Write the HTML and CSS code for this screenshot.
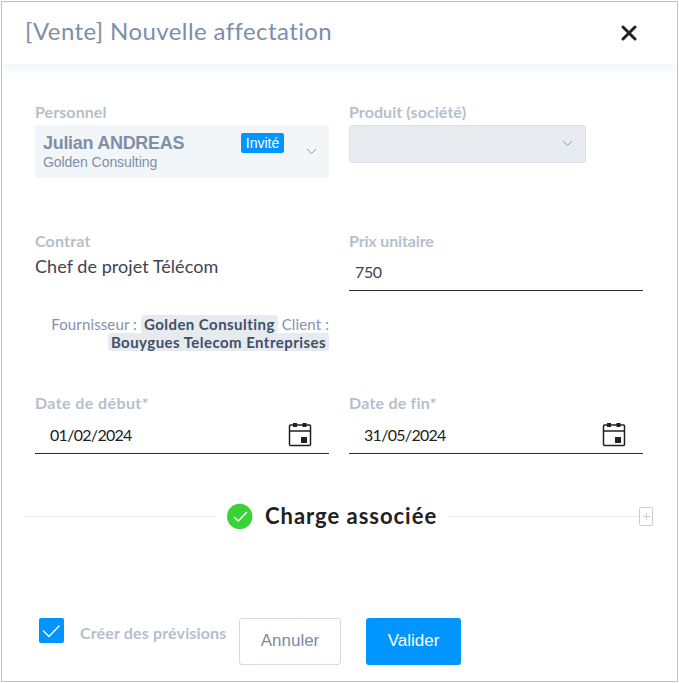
FILE: index.html
```html
<!DOCTYPE html>
<html lang="fr">
<head>
  <meta charset="UTF-8" />
  <meta name="viewport" content="width=device-width, initial-scale=1" />
  <title>Nouvelle affectation</title>
  <link rel="stylesheet" href="styles.css">
</head>
<body>
  <div class="modal">
    <header class="modal-header">
      <h1>[Vente] Nouvelle affectation</h1>
      <button class="btn-close" aria-label="Fermer">
        <svg width="16" height="16" viewBox="0 0 16 16"><path d="M2 2L14 14M14 2L2 14" /></svg>
      </button>
    </header>

    <form class="modal-body">
      <div class="grid">
        <div class="field">
          <label>Personnel</label>
          <div class="select select-user">
            <div class="user">
              <strong>Julian ANDREAS</strong>
              <span>Golden Consulting</span>
            </div>
            <span class="badge">Invité</span>
            <svg class="chevron" width="11" height="7" viewBox="0 0 11 7"><path d="M1 1L5.5 5.5L10 1" /></svg>
          </div>
        </div>
        <div class="field">
          <label>Produit (société)</label>
          <div class="select select-disabled">
            <svg class="chevron" width="11" height="7" viewBox="0 0 11 7"><path d="M1 1L5.5 5.5L10 1" /></svg>
          </div>
        </div>

        <div class="field">
          <label class="label-contrat">Contrat</label>
          <div class="contrat">Chef de projet Télécom</div>
          <div class="parties">
            <div>Fournisseur : <b>Golden Consulting</b> Client :</div>
            <div><b>Bouygues Telecom Entreprises</b></div>
          </div>
        </div>
        <div class="field">
          <label class="label-prix">Prix unitaire</label>
          <div class="input input-prix">750</div>
        </div>

        <div class="field">
          <label class="label-date">Date de début*</label>
          <div class="input input-date">
            <span>01/02/2024</span>
            <svg class="calendar" width="24" height="25" viewBox="0 0 24 25">
              <rect x="1.5" y="3" width="21" height="20.5" rx="1" />
              <path d="M1.5 9H22.5" />
              <path class="plein" d="M5 1H9V5H5ZM14.5 1H18.5V5H14.5ZM13 15H19V21H13Z" />
            </svg>
          </div>
        </div>
        <div class="field">
          <label class="label-date label-fin">Date de fin*</label>
          <div class="input input-date">
            <span>31/05/2024</span>
            <svg class="calendar" width="24" height="25" viewBox="0 0 24 25">
              <rect x="1.5" y="3" width="21" height="20.5" rx="1" />
              <path d="M1.5 9H22.5" />
              <path class="plein" d="M5 1H9V5H5ZM14.5 1H18.5V5H14.5ZM13 15H19V21H13Z" />
            </svg>
          </div>
        </div>
      </div>

      <!-- Séparateur de section -->
      <div class="section">
        <span class="line line-left"></span>
        <svg class="ok" width="26" height="26" viewBox="0 0 26 26">
          <circle cx="12.7" cy="13.5" r="12.7" />
          <path d="M7 14L11.2 18L20 9" />
        </svg>
        <h2>Charge associée</h2>
        <span class="line"></span>
        <span class="plus">
          <svg width="7" height="7" viewBox="0 0 7 7"><path d="M0 3.5H7M3.5 0V7" /></svg>
        </span>
      </div>

      <div class="actions">
        <span class="checkbox">
          <svg width="19" height="14" viewBox="0 0 19 14"><path d="M1 6.5L7 12.5L17.5 1.5" /></svg>
        </span>
        <label>Créer des prévisions</label>
        <button type="button" class="btn-annuler">Annuler</button>
        <button type="button" class="btn-valider">Valider</button>
      </div>
    </form>
  </div>
</body>
</html>
```
FILE: styles.css
```css
* {
  box-sizing: border-box;
}

body {
  margin: 0;
  padding: 1px;
  background-color: #fff;
  font-family: Lato, "Liberation Sans", sans-serif;
  color: #3f4254;
}

svg {
  display: block;
  fill: none;
}

.modal {
  width: 677px;
  height: 681px;
  border: 1px solid #c3c3c3;
  background-color: #fff;
}

.modal-header {
  display: flex;
  align-items: center;
  justify-content: space-between;
  height: 62px;
  padding: 0 40px 0 23px;
  box-shadow: 0 1px 15px rgba(82, 105, 160, 0.13);
  clip-path: inset(0 0 -20px 0);
}

h1 {
  margin: 0;
  padding-bottom: 5px;
  font-size: 24px;
  font-weight: 400;
  color: #7e8ea9;
  letter-spacing: 0.41px;
  white-space: nowrap;
}

.btn-close {
  padding: 0;
  border: none;
  background: none;
}

.btn-close path {
  stroke: #212121;
  stroke-width: 3;
  stroke-linecap: round;
}

.modal-body {
  padding: 38px 24px 0 23px;
}

.grid {
  display: grid;
  grid-template-columns: 294px 294px;
  grid-template-rows: 129px 162px 103px;
  column-gap: 20px;
  padding-left: 10px;
}

label {
  display: block;
  height: 23px;
  line-height: 20px;
  font-size: 16px;
  font-weight: 700;
  color: #b5bfcb;
  letter-spacing: 0.08px;
  white-space: nowrap;
}

.label-contrat {
  letter-spacing: 0.2px;
}

.label-prix {
  letter-spacing: -0.15px;
}

.label-date {
  letter-spacing: 0.4px;
}

.label-fin {
  letter-spacing: 0.22px;
}

.select {
  display: flex;
  align-items: center;
  border-radius: 3px;
}

.select-user {
  height: 53px;
  padding: 0 12px 0 8px;
  background-color: #f3f6f9;
  font-family: "Liberation Sans", Arial, sans-serif;
}

.select-disabled {
  width: 237px;
  height: 38px;
  padding: 0 12px 2px 0;
  justify-content: flex-end;
  border: 1px solid #dcdfe8;
  background-color: #e7eaef;
}

.user {
  display: flex;
  flex-direction: column;
  flex: 1;
  color: #7e8fa8;
}

.user strong {
  font-size: 18px;
  line-height: 20px;
  letter-spacing: -0.3px;
}

.user span {
  font-size: 14px;
  line-height: 18px;
  letter-spacing: -0.06px;
}

.badge {
  width: 43px;
  height: 20px;
  margin: 0 22px 17px 0;
  border-radius: 2px;
  background-color: #0095ff;
  color: #fff;
  font-size: 14px;
  line-height: 20px;
  text-align: center;
}

.chevron path {
  stroke: #8d9aab;
}

.contrat {
  margin-top: 1px;
  font-size: 18px;
  line-height: 22px;
  letter-spacing: 0.05px;
}

.parties {
  margin-top: 38px;
  font-size: 15px;
  line-height: 18px;
  color: #8391a9;
  letter-spacing: 0.12px;
  text-align: right;
  white-space: nowrap;
}

.parties b {
  display: inline-block;
  padding: 0 3px;
  border-radius: 3px;
  background-color: #e7eaef;
  color: #3d5068;
  letter-spacing: 0.45px;
}

.input {
  display: flex;
  align-items: center;
  height: 37px;
  border-bottom: 1px solid #2b2b3f;
  font-size: 16px;
}

.input-prix {
  padding: 0 0 2px 6px;
  letter-spacing: -0.4px;
}

.input-date {
  height: 38px;
  justify-content: space-between;
  padding: 0 17px 0 15px;
  color: #212121;
  letter-spacing: -0.7px;
}

.calendar rect,
.calendar path {
  stroke: #212121;
  stroke-width: 1.5;
}

.calendar .plein {
  fill: #212121;
  stroke: none;
}

.section {
  display: flex;
  align-items: center;
  height: 40px;
}

.line {
  flex: 1;
  height: 1px;
  background-color: #ebebeb;
}

.line-left {
  flex: none;
  width: 190px;
}

.ok {
  margin-left: 12px;
}

.ok circle {
  fill: #3ad336;
}

.ok path,
.checkbox path {
  stroke: #fff;
  stroke-width: 1.3;
}

h2 {
  margin: 0 12px;
  padding-bottom: 2px;
  font-size: 22px;
  font-weight: 700;
  color: #212121;
  letter-spacing: 0.97px;
  white-space: nowrap;
}

.plus {
  display: flex;
  align-items: center;
  justify-content: center;
  width: 14px;
  height: 19px;
  border: 1px solid #ccc;
  border-radius: 2px;
}

.plus path {
  stroke: #ccc;
}

.actions {
  display: flex;
  align-items: flex-start;
  margin-top: 82px;
  padding-left: 14px;
}

.checkbox {
  display: flex;
  align-items: center;
  justify-content: center;
  width: 25px;
  height: 25px;
  border-radius: 2px;
  background-color: #0095ff;
}

.actions label {
  width: 159px;
  margin: 5px 0 0 16px;
  letter-spacing: 0.15px;
}

.actions button {
  height: 47px;
  padding: 0 0 2px;
  border-radius: 3px;
  font-family: "Liberation Sans", Arial, sans-serif;
  font-size: 17px;
}

.btn-annuler {
  width: 102px;
  border: 1px solid #d5d9e0;
  background-color: #fff;
  color: #7e8aa3;
}

.btn-valider {
  width: 95px;
  margin-left: 25px;
  border: none;
  background-color: #0095ff;
  color: #fff;
}
```
